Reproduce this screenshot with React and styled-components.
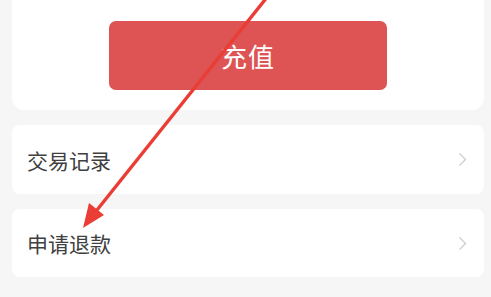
import React from 'react';
import styled, { createGlobalStyle } from 'styled-components';

const Global = createGlobalStyle`
  html, body {
    margin: 0;
    padding: 0;
    background: #f6f6f6;
    font-family: "Noto Sans CJK SC", "Noto Sans", sans-serif;
  }
`;

const Page = styled.div`
  position: relative;
  width: 491px;
  height: 297px;
  overflow: hidden;
  background: #f6f6f6;
  padding: 0 7px 0 12px;
  box-sizing: border-box;
  display: flex;
  flex-direction: column;
  gap: 15px;
`;

const TopCard = styled.div`
  background: #ffffff;
  border-radius: 0 0 12px 12px;
  padding: 21px 0 20px;
  display: flex;
  justify-content: center;
`;

const Button = styled.button`
  width: 278px;
  height: 69px;
  border: none;
  border-radius: 7px;
  background: #de5353;
  color: #ffffff;
  font-family: inherit;
  font-size: 26px;
  font-weight: 400;
  letter-spacing: 1px;
  cursor: pointer;
`;

const Row = styled.div`
  background: #ffffff;
  border-radius: 8px;
  height: ${p => p.$h}px;
  display: flex;
  align-items: center;
  justify-content: space-between;
  padding: 0 17px 0 15px;
`;

const Label = styled.span`
  font-size: 21px;
  font-weight: 400;
  color: #404040;
`;

const Arrow = styled.svg`
  position: absolute;
  left: 0;
  top: 0;
  pointer-events: none;
`;

const Chevron = () => (
  <svg width="9" height="15" viewBox="0 0 9 15">
    <path d="M1.5 1.5 L7.5 7.5 L1.5 13.5" fill="none" stroke="#cfcfcf" strokeWidth="1.4" />
  </svg>
);

export default function App() {
  const items = [
    { label: '交易记录', h: 69 },
    { label: '申请退款', h: 68 },
  ];
  return (
    <Page>
      <Global />
      <TopCard>
        <Button>充值</Button>
      </TopCard>
      {items.map(it => (
        <Row key={it.label} $h={it.h}>
          <Label>{it.label}</Label>
          <Chevron />
        </Row>
      ))}
      <Arrow width="491" height="297" viewBox="0 0 491 297">
        <line x1="268" y1="-4" x2="97" y2="210" stroke="#ea3d36" strokeWidth="3.4" strokeLinecap="round" />
        <polygon points="83,228 89,203 104,215" fill="#ea3d36" />
      </Arrow>
    </Page>
  );
}
